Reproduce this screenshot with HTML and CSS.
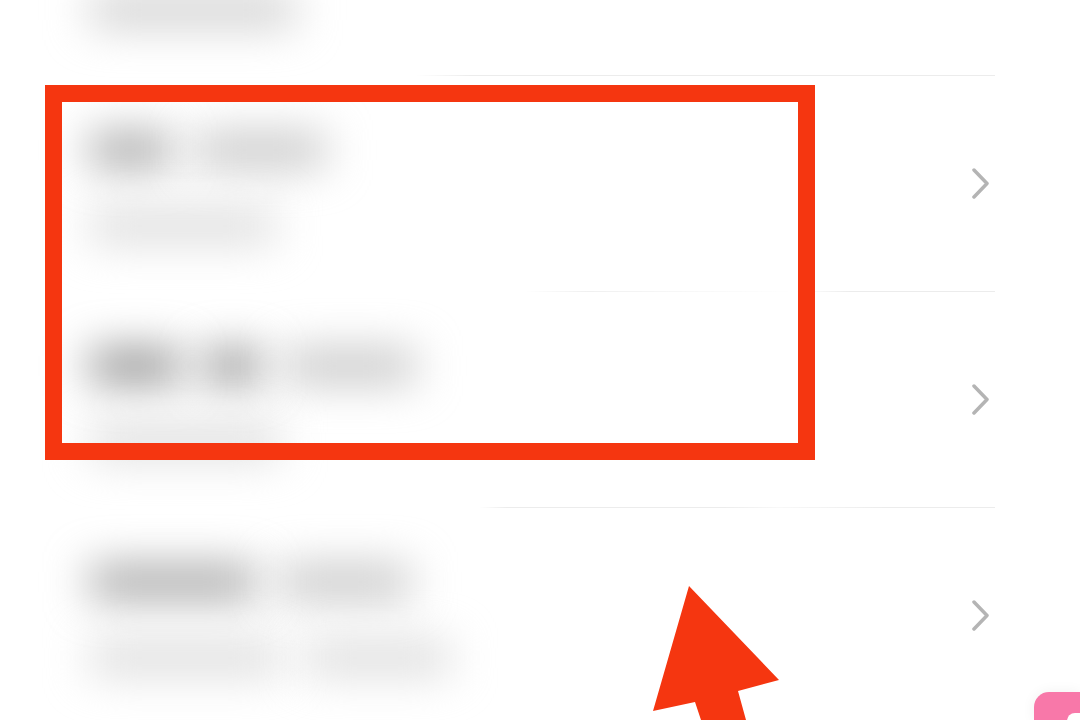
FILE: index.html
```html
<!DOCTYPE html>
<html lang="en">
<head>
<meta charset="utf-8">
<title>Settings list</title>
<link rel="stylesheet" href="styles.css">
</head>
<body>
<main class="list">
  <section class="row">
    <div class="text">
      <div class="line"></div>
      <div class="line"><span class="blob pale w205"></span></div>
    </div>
  </section>
  <div class="divider d1"></div>
  <section class="row">
    <div class="text">
      <div class="line"><span class="blob mid w80"></span><span class="blob soft w130"></span></div>
      <div class="line"><span class="blob faint w185"></span></div>
    </div>
    <svg class="chev" viewBox="0 0 20 32"><path d="M3 3 L16 16.500 L3 30"/></svg>
  </section>
  <div class="divider d2"></div>
  <section class="row">
    <div class="text">
      <div class="line"><span class="blob dark w90"></span><span class="blob dark w55"></span><span class="blob soft w130"></span></div>
      <div class="line"><span class="blob faint w190"></span></div>
    </div>
    <svg class="chev" viewBox="0 0 20 32"><path d="M3 3 L16 16.500 L3 30"/></svg>
  </section>
  <div class="divider d3"></div>
  <section class="row">
    <div class="text">
      <div class="line"><span class="blob mid w165"></span><span class="blob soft w130"></span></div>
      <div class="line"><span class="blob faint w190"></span><span class="blob faint w145"></span></div>
    </div>
    <svg class="chev" viewBox="0 0 20 32"><path d="M3 3 L16 16.500 L3 30"/></svg>
  </section>
</main>
<div class="highlight"></div>
<svg class="arrow" viewBox="0 0 1080 720"><polygon points="689,586 779,680 738,691 746,720 701,720 695,702 653,711"/></svg>
<div class="fab"><div class="fab-inner"></div></div>
</body>
</html>
```
FILE: styles.css
```css
html, body {
  margin: 0;
  height: 720px;
  overflow: hidden;
  background: #fff;
  font-family: "Liberation Sans", sans-serif;
}
.list {
  margin-top: -140px;
  padding-right: 85px;
  padding-left: 90px;
}
.row {
  display: flex;
  justify-content: space-between;
  align-items: center;
  height: 215px;
  padding-right: 4px;
}
.text {
  display: flex;
  flex-direction: column;
  gap: 44px;
  padding-top: 8px;
}
.line {
  display: flex;
  gap: 25px;
  height: 32px;
}
.blob {
  display: block;
  height: 32px;
  filter: blur(22px);
}
.dark { background: #8a8a8a; }
.mid { background: #a0a0a0; }
.soft { background: #c2c2c2; }
.pale { background: #cdcdcd; }
.faint { background: #dadada; }
.w55 { width: 55px; }
.w80 { width: 80px; }
.w90 { width: 90px; }
.w130 { width: 130px; }
.w145 { width: 145px; }
.w165 { width: 165px; }
.w185 { width: 185px; }
.w190 { width: 190px; }
.w205 { width: 205px; }
.divider {
  height: 1px;
}
.d1 { background: linear-gradient(90deg, #fff 0 36%, #ececec 42% 100%); }
.d2 { background: linear-gradient(90deg, #fff 0 48%, #f0f0f0 55%, #f6f6f6 63%, #fff 78%, #ececec 84% 100%); }
.d3 { background: linear-gradient(90deg, #fff 0 43%, #ececec 46% 70%, #f8f8f8 76%, #ececec 88% 100%); }
.chev {
  width: 20px;
  height: 32px;
  flex: none;
  margin-top: -2px;
}
.chev path {
  fill: none;
  stroke: #b4b4b4;
  stroke-width: 3.5;
  stroke-linecap: round;
  stroke-linejoin: round;
}
.highlight {
  position: absolute;
  left: 45px;
  top: 85px;
  width: 736px;
  height: 341px;
  border: 17px solid #f53610;
}
.arrow {
  position: absolute;
  left: 0;
  top: 0;
  width: 1080px;
  height: 720px;
}
.arrow polygon { fill: #f53610; }
.fab {
  position: absolute;
  left: 1034px;
  top: 692px;
  width: 46px;
  height: 28px;
  overflow: hidden;
  border-top-left-radius: 15px;
  background: #f878a9;
  box-shadow: 0 0 14px rgba(0, 0, 0, 0.06);
}
.fab-inner {
  position: absolute;
  left: 33px;
  top: 21px;
  width: 20px;
  height: 16px;
  border-radius: 8px;
  background: #fff;
}
```
